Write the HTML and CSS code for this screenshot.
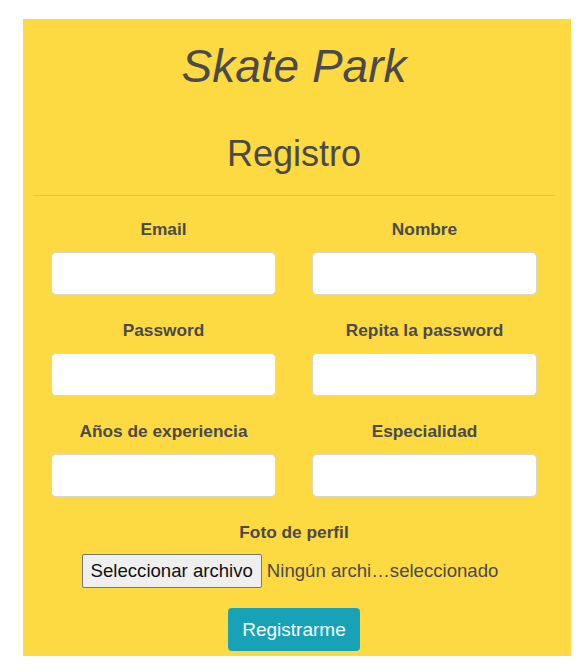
FILE: index.html
```html
<!DOCTYPE html>
<html lang="es">
<head>
<meta charset="utf-8">
<title>Skate Park - Registro</title>
<link rel="stylesheet" href="styles.css">
</head>
<body>
<main class="panel">
  <h1 class="brand">Skate Park</h1>
  <h2 class="heading">Registro</h2>
  <hr class="divider">
  <form class="form">
    <div class="grid">
      <div class="field">
        <label class="label" for="email">Email</label>
        <input class="input" id="email" type="email">
      </div>
      <div class="field">
        <label class="label" for="nombre">Nombre</label>
        <input class="input" id="nombre" type="text">
      </div>
      <div class="field">
        <label class="label" for="pass">Password</label>
        <input class="input" id="pass" type="password">
      </div>
      <div class="field">
        <label class="label" for="pass2">Repita la password</label>
        <input class="input" id="pass2" type="password">
      </div>
      <div class="field">
        <label class="label" for="exp">Años de experiencia</label>
        <input class="input" id="exp" type="text">
      </div>
      <div class="field">
        <label class="label" for="esp">Especialidad</label>
        <input class="input" id="esp" type="text">
      </div>
    </div>
    <div class="photo">
      <span class="label">Foto de perfil</span>
      <div class="file">
        <button type="button" class="file-btn">Seleccionar archivo</button>
        <span class="file-name">Ningún archi…seleccionado</span>
      </div>
    </div>
    <div class="actions">
      <button type="submit" class="submit">Registrarme</button>
    </div>
  </form>
</main>
</body>
</html>
```

FILE: styles.css
```css
html, body {
  margin: 0;
  padding: 0;
  background: #ffffff;
}

body {
  font-family: "Liberation Sans", Arial, sans-serif;
  color: #4a4a4a;
}

.panel {
  width: 548px;
  box-sizing: border-box;
  margin: 19px 0 15px 23px;
  padding: 0 16px 5px 10px;
  background: #fdda42;
  display: flex;
  flex-direction: column;
}

.brand {
  margin: 20px 0 0;
  font-size: 46px;
  line-height: 55px;
  font-style: italic;
  font-weight: 400;
  text-align: center;
  color: #4a4a4a;
}

.heading {
  margin: 39px 0 0;
  font-size: 36px;
  line-height: 42px;
  font-weight: 400;
  text-align: center;
  color: #4a4a4a;
}

.divider {
  margin: 20px 0 0;
  border: 0;
  border-top: 1px solid #e3c33c;
  height: 0;
}

.form {
  display: flex;
  flex-direction: column;
  padding-top: 23px;
}

.grid {
  display: grid;
  grid-template-columns: minmax(0, 1fr) minmax(0, 1fr);
}

.field {
  display: flex;
  flex-direction: column;
  align-items: stretch;
  min-width: 0;
  padding: 0 18px 25px;
}

.label {
  display: block;
  font-size: 17.3px;
  line-height: 20px;
  font-weight: 700;
  text-align: center;
  color: #4a4a4a;
  margin-bottom: 13px;
}

.input {
  width: 100%;
  min-width: 0;
  height: 43px;
  box-sizing: border-box;
  border: 1px solid #d9d6cc;
  border-radius: 5px;
  background: #ffffff;
  padding: 6px 12px;
  font: inherit;
}

.photo {
  display: flex;
  flex-direction: column;
  align-items: center;
}

.photo .label {
  margin-bottom: 12px;
}

.file {
  display: flex;
  align-items: center;
  gap: 5px;
  margin-right: 8px;
}

.file-btn {
  height: 34px;
  box-sizing: border-box;
  padding: 0 8px;
  border: 1px solid #767676;
  border-radius: 2px;
  background: #efefef;
  color: #111111;
  font-family: "Liberation Sans", Arial, sans-serif;
  font-size: 18.6px;
}

.file-name {
  font-size: 18.6px;
  color: #4a4a4a;
}

.actions {
  display: flex;
  justify-content: center;
  padding-top: 20px;
}

.submit {
  height: 43px;
  box-sizing: border-box;
  padding: 0 14px;
  border: 0;
  border-radius: 4px;
  background: #17a2b8;
  color: #ffffff;
  font-family: "Liberation Sans", Arial, sans-serif;
  font-size: 19px;
}
```
